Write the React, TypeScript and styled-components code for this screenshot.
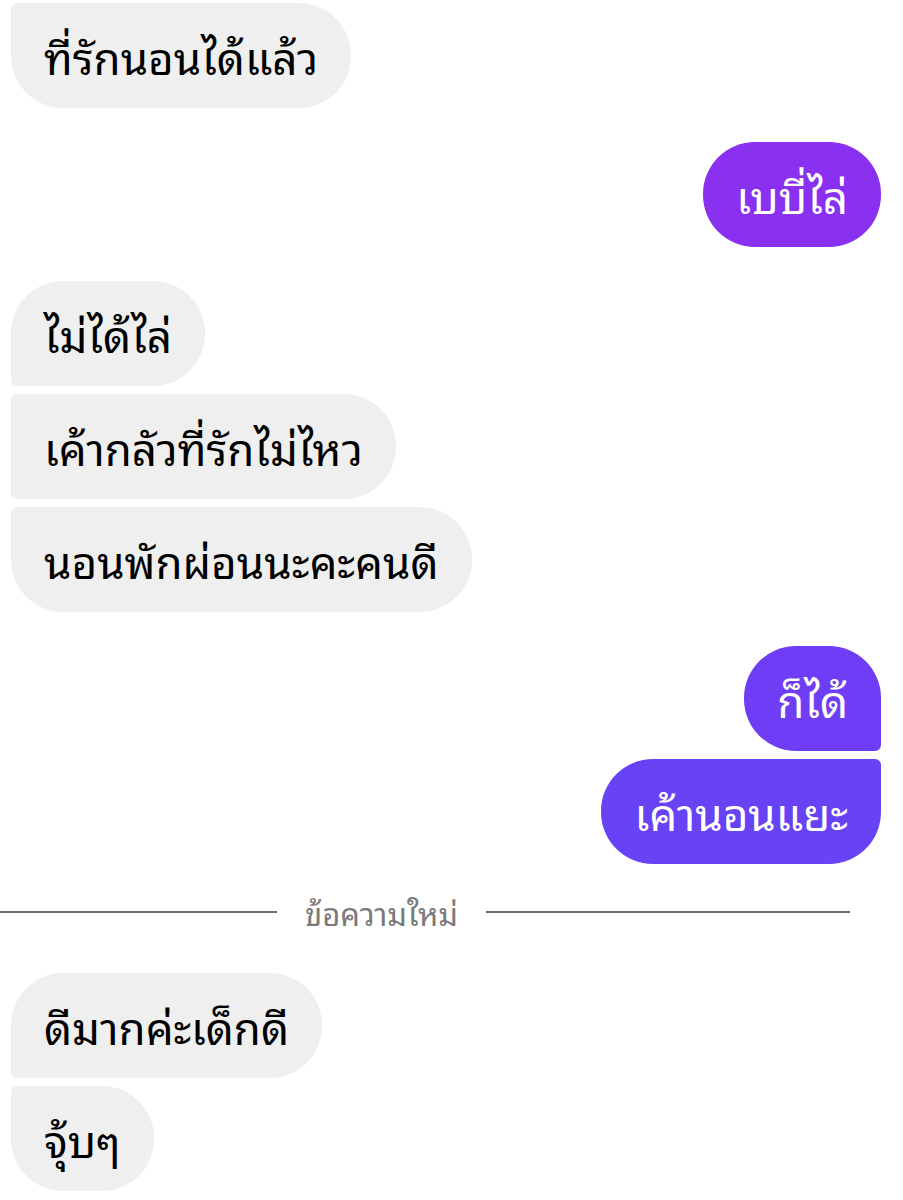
import * as React from 'react';
import styled, { createGlobalStyle, css } from 'styled-components';

const GlobalStyle = createGlobalStyle`
  html, body {
    margin: 0;
    padding: 0;
    background: #ffffff;
  }
  body {
    font-family: "Noto Sans Thai Looped", "Garuda", "Loma", "Noto Sans Thai", "Noto Sans", "DejaVu Sans", sans-serif;
  }
`;

type Side = 'in' | 'out';
type Pos = 'single' | 'first' | 'middle' | 'last';

interface Message {
  text: string;
  side: Side;
  pos: Pos;
  color?: string;
}

const BIG = 52;
const SMALL = 6;

const groups: Message[][] = [
  [{ text: 'ที่รักนอนได้แล้ว', side: 'in', pos: 'last' }],
  [{ text: 'เบบี่ไล่', side: 'out', pos: 'single', color: '#8a30f0' }],
  [
    { text: 'ไม่ได้ไล่', side: 'in', pos: 'first' },
    { text: 'เค้ากลัวที่รักไม่ไหว', side: 'in', pos: 'middle' },
    { text: 'นอนพักผ่อนนะคะคนดี', side: 'in', pos: 'last' },
  ],
  [
    { text: 'ก็ได้', side: 'out', pos: 'first', color: '#6e3df5' },
    { text: 'เค้านอนแยะ', side: 'out', pos: 'last', color: '#6743f5' },
  ],
];

const afterDivider: Message[][] = [
  [
    { text: 'ดีมากค่ะเด็กดี', side: 'in', pos: 'first' },
    { text: 'จุ้บๆ', side: 'in', pos: 'last' },
  ],
];

const radius = (side: Side, pos: Pos) => {
  const top = pos === 'single' || pos === 'first' ? BIG : SMALL;
  const bottom = pos === 'single' || pos === 'last' ? BIG : SMALL;
  if (side === 'in') return `${top}px ${BIG}px ${BIG}px ${bottom}px`;
  return `${BIG}px ${top}px ${bottom}px ${BIG}px`;
};

const Thread = styled.div`
  display: flex;
  flex-direction: column;
  gap: 34px;
  padding: 3px 22px 0 11px;
  width: 903px;
  box-sizing: border-box;
`;

const Group = styled.div<{ $side: Side }>`
  display: flex;
  flex-direction: column;
  gap: 8px;
  align-items: ${(p) => (p.$side === 'in' ? 'flex-start' : 'flex-end')};
`;

const Bubble = styled.div<{ $side: Side; $pos: Pos; $color?: string }>`
  height: 105px;
  box-sizing: border-box;
  display: flex;
  align-items: center;
  padding: 0 33px 2px 33px;
  font-size: 44px;
  line-height: 1;
  white-space: nowrap;
  border-radius: ${(p) => radius(p.$side, p.$pos)};
  ${(p) =>
    p.$side === 'in'
      ? css`
          background: #efefef;
          color: #000000;
        `
      : css`
          background: ${p.$color};
          color: #ffffff;
        `}
`;

const Divider = styled.div`
  display: grid;
  grid-template-columns: 277px auto 364px;
  column-gap: 28px;
  align-items: center;
  height: 28px;
  margin: 0 0 13px -11px;
  width: 849px;
`;

const Rule = styled.div`
  height: 2px;
  background: #707070;
`;

const DividerText = styled.span`
  color: #7a7a7a;
  font-size: 31px;
  line-height: 28px;
  white-space: nowrap;
`;

const renderGroup = (g: Message[], i: number) => (
  <Group key={i} $side={g[0].side}>
    {g.map((m, j) => (
      <Bubble key={j} $side={m.side} $pos={m.pos} $color={m.color}>
        {m.text}
      </Bubble>
    ))}
  </Group>
);

export default function App() {
  return (
    <>
      <GlobalStyle />
      <Thread>
        {groups.map(renderGroup)}
        <Divider>
          <Rule />
          <DividerText>ข้อความใหม่</DividerText>
          <Rule />
        </Divider>
        {afterDivider.map(renderGroup)}
      </Thread>
    </>
  );
}
